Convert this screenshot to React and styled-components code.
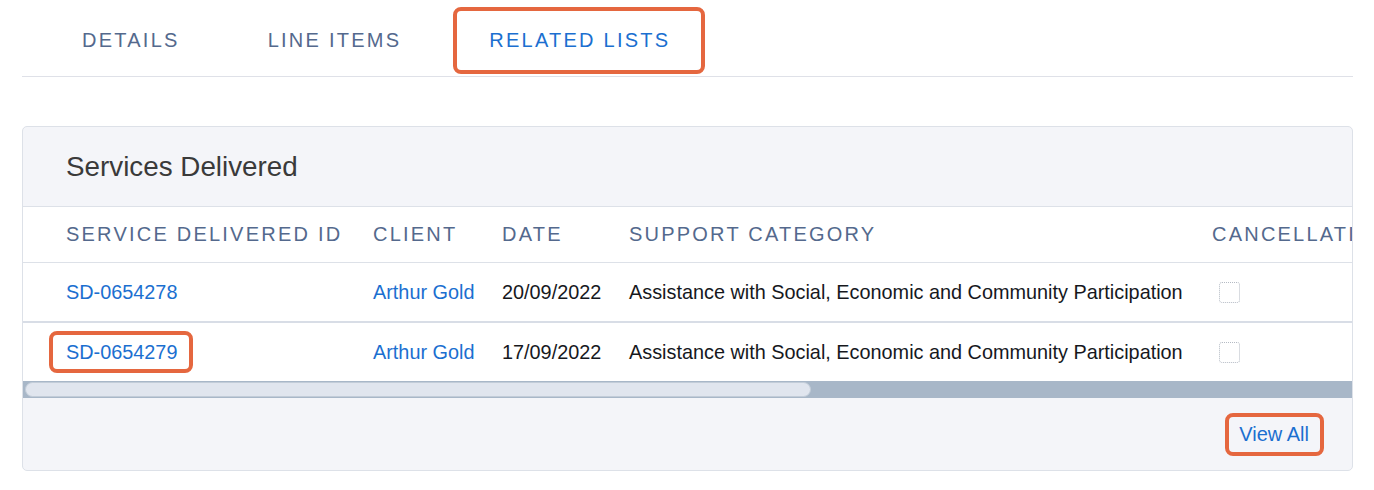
import React from 'react';
import styled, { createGlobalStyle } from 'styled-components';

const GlobalStyle = createGlobalStyle`
  body {
    margin: 0;
    background: #ffffff;
    font-family: "Liberation Sans", Arial, sans-serif;
  }
`

const Page = styled.div`
  padding: 0 21px 0 22px;
`

const TabBar = styled.div`
  display: flex;
  gap: 88px;
  padding-left: 60px;
  height: 76px;
  border-bottom: 1px solid #dfe1e8;
`

const Tab = styled.div`
  position: relative;
  display: flex;
  align-items: center;
  height: 80px;
  line-height: 1;
  font-size: 20px;
  letter-spacing: 2.25px;
  color: ${p => (p.active ? '#1b6fd0' : '#54698d')};
  &::after {
    content: '';
    display: ${p => (p.marked ? 'block' : 'none')};
    position: absolute;
    left: -36px;
    right: -35px;
    top: 7px;
    height: 67px;
    box-sizing: border-box;
    border: 4px solid #e5673f;
    border-radius: 8px;
  }
`

const TabLabel = styled.span`
  margin-top: -1px;
`

const Card = styled.div`
  margin-top: 49px;
  border: 1px solid #dde1e8;
  border-radius: 5px;
  background: #f4f5f9;
  overflow: hidden;
`

const CardHeader = styled.div`
  height: 79px;
  display: flex;
  align-items: center;
  padding-left: 43px;
  font-size: 27.8px;
  color: #3a3a3a;
`

const Scroller = styled.div`
  overflow: hidden;
  background: #ffffff;
  border-top: 1px solid #dde1e8;
`

const Table = styled.table`
  border-collapse: collapse;
  table-layout: fixed;
  width: 2240px;
  font-size: 19.85px;
`

const Th = styled.th`
  height: 55px;
  padding: 0;
  text-align: left;
  font-weight: normal;
  font-size: 20px;
  letter-spacing: 2.22px;
  color: #54698d;
  white-space: nowrap;
  overflow: hidden;
  &:first-child { padding-left: 43px; }
`

const Td = styled.td`
  height: 58px;
  padding: 0;
  border-top: ${p => (p.thick ? '2px solid #d8dde6' : '1px solid #dde1e8')};
  color: ${p => (p.link ? '#1b6fd0' : '#16181d')};
  white-space: nowrap;
  &:first-child { padding-left: 43px; }
`

const IdLink = styled.span`
  position: relative;
  &::after {
    content: '';
    display: ${p => (p.marked ? 'block' : 'none')};
    position: absolute;
    left: -17px;
    right: -16px;
    top: -10px;
    bottom: -10px;
    border: 4px solid #e5673f;
    border-radius: 8px;
  }
`

const Checkbox = styled.span`
  display: inline-block;
  width: 19px;
  height: 19px;
  margin-left: 7px;
  margin-top: 6px;
  border: 1px dotted #b4bac3;
  border-radius: 3px;
`

const ScrollTrack = styled.div`
  height: 17px;
  background: #a8b7c8;
  padding: 1px 2px;
  box-sizing: border-box;
`

const ScrollThumb = styled.div`
  height: 15px;
  box-sizing: border-box;
  background: #e0e5ee;
  border: 1px solid #c2ccd8;
  border-radius: 8px;
`

const Footer = styled.div`
  height: 72px;
  display: flex;
  align-items: center;
  justify-content: flex-end;
  padding-right: 43px;
`

const ViewAll = styled.span`
  position: relative;
  font-size: 20px;
  color: #1b6fd0;
  &::after {
    content: '';
    position: absolute;
    left: -14px;
    right: -15px;
    top: -10px;
    bottom: -10px;
    border: 4px solid #e5673f;
    border-radius: 8px;
  }
`

const columns = [
  { label: 'Service Delivered ID', width: 350 },
  { label: 'Client', width: 129 },
  { label: 'Date', width: 127 },
  { label: 'Support Category', width: 583 },
  { label: 'Cancellation', width: 260 },
  { label: 'Quantity', width: 200 },
  { label: 'Unit Price', width: 200 },
  { label: 'Total', width: 391 },
]

const rows = [
  { id: 'SD-0654278', client: 'Arthur Gold', date: '20/09/2022' },
  { id: 'SD-0654279', client: 'Arthur Gold', date: '17/09/2022', marked: true },
]

const category = 'Assistance with Social, Economic and Community Participation'

const tableWidth = columns.reduce((s, c) => s + c.width, 0)
const viewWidth = 1329

export default function App() {
  const thumbWidth = Math.round((viewWidth / tableWidth) * (viewWidth - 4))
  return (
    <Page>
      <GlobalStyle />
      <TabBar>
        <Tab><TabLabel>DETAILS</TabLabel></Tab>
        <Tab><TabLabel>LINE ITEMS</TabLabel></Tab>
        <Tab active marked><TabLabel>RELATED LISTS</TabLabel></Tab>
      </TabBar>
      <Card>
        <CardHeader>Services Delivered</CardHeader>
        <Scroller>
          <Table>
            <colgroup>
              {columns.map(c => <col key={c.label} style={{ width: c.width }} />)}
            </colgroup>
            <thead>
              <tr>
                {columns.map(c => <Th key={c.label}>{c.label.toUpperCase()}</Th>)}
              </tr>
            </thead>
            <tbody>
              {rows.map((r, i) => (
                <tr key={r.id}>
                  <Td link thick={i > 0}><IdLink marked={r.marked}>{r.id}</IdLink></Td>
                  <Td link thick={i > 0}>{r.client}</Td>
                  <Td thick={i > 0}>{r.date}</Td>
                  <Td thick={i > 0}>{category}</Td>
                  <Td thick={i > 0}><Checkbox /></Td>
                  <Td thick={i > 0} />
                  <Td thick={i > 0} />
                  <Td thick={i > 0} />
                </tr>
              ))}
            </tbody>
          </Table>
        </Scroller>
        <ScrollTrack>
          <ScrollThumb style={{ width: thumbWidth }} />
        </ScrollTrack>
        <Footer>
          <ViewAll>View All</ViewAll>
        </Footer>
      </Card>
    </Page>
  )
}
